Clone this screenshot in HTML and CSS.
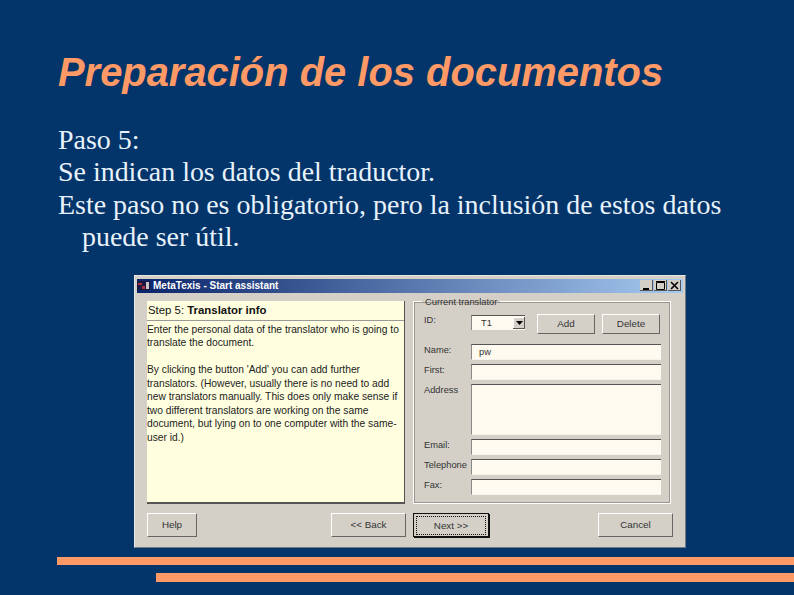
FILE: index.html
```html
<!DOCTYPE html>
<html lang="en">
<head>
  <meta charset="UTF-8" />
  <title>Preparación de los documentos</title>
  <link rel="stylesheet" href="styles.css">
</head>
<body>
  <div class="slide">
    <h1>Preparación de los documentos</h1>
    <div class="slide-text">
      <p>Paso 5:</p>
      <p>Se indican los datos del traductor.</p>
      <p>Este paso no es obligatorio, pero la inclusión de estos datos puede ser útil.</p>
    </div>

    <!-- Screenshot of the assistant window -->
    <div class="window">
      <div class="titlebar">
        <svg class="app-icon" width="13" height="9" viewBox="0 0 13 9">
          <rect width="13" height="9" fill="#1a1a40"/>
          <rect x="1" y="2" width="4" height="2" fill="#b03040"/>
          <rect x="5" y="5" width="3" height="3" fill="#b03040"/>
          <rect x="9" y="1" width="3" height="7" fill="#c8c8c8"/>
        </svg>
        <span class="title">MetaTexis - Start assistant</span>
        <div class="title-buttons">
          <div class="title-btn">
            <svg width="13" height="11" viewBox="0 0 13 11"><rect x="3" y="8" width="6" height="2" fill="#000"/></svg>
          </div>
          <div class="title-btn">
            <svg width="13" height="11" viewBox="0 0 13 11"><path d="M2.5 2.5h8v7h-8z M2 1.5h9" fill="none" stroke="#000"/></svg>
          </div>
          <div class="title-btn">
            <svg width="13" height="11" viewBox="0 0 13 11"><path d="M3 2l7 7M10 2l-7 7" fill="none" stroke="#000" stroke-width="1.6"/></svg>
          </div>
        </div>
      </div>

      <div class="window-body">
        <div class="info-panel">
          <div class="info-title">Step 5: <b>Translator info</b></div>
          <div class="info-text">
            <p>Enter the personal data of the translator who is going to translate the document.</p>
            <p>By clicking the button 'Add' you can add further translators. (However, usually there is no need to add new translators manually. This does only make sense if two different translators are working on the same document, but lying on to one computer with the same-user id.)</p>
          </div>
        </div>

        <fieldset class="group">
          <legend>Current translator</legend>
          <div class="id-row">
            <label>ID:</label>
            <div class="combo">
              <span>T1</span>
              <div class="combo-btn"><svg width="7" height="4" viewBox="0 0 7 4"><path d="M0 0h7L3.5 4z" fill="#000"/></svg></div>
            </div>
            <button class="btn btn-add">Add</button>
            <button class="btn btn-delete">Delete</button>
          </div>
          <div class="field name-field"><label>Name:</label><div class="input">pw</div></div>
          <div class="field"><label>First:</label><div class="input"></div></div>
          <div class="field"><label>Address</label><div class="input input-tall"></div></div>
          <div class="field"><label>Email:</label><div class="input"></div></div>
          <div class="field"><label>Telephone</label><div class="input"></div></div>
          <div class="field"><label>Fax:</label><div class="input"></div></div>
        </fieldset>
      </div>

      <div class="window-buttons">
        <button class="btn btn-help">Help</button>
        <button class="btn btn-back">&lt;&lt; Back</button>
        <button class="btn btn-next"><span>Next &gt;&gt;</span></button>
        <button class="btn btn-cancel">Cancel</button>
      </div>
    </div>
  </div>

  <div class="bars">
    <div class="bar bar-long"></div>
    <div class="bar bar-short"></div>
  </div>
</body>
</html>
```

FILE: styles.css
```css
html, body {
  margin: 0;
  height: 595px;
  overflow: hidden;
}

body {
  background: #03356a;
  display: flex;
  flex-direction: column;
}

.slide {
  flex: 1;
  padding: 50px 0 0 58px;
}

h1 {
  margin: 0;
  font-family: "Liberation Sans", Arial, sans-serif;
  font-size: 39.9px;
  line-height: 44px;
  font-weight: bold;
  font-style: italic;
  color: #ff9966;
}

.slide-text {
  margin-top: 30px;
  width: 690px;
  font-family: "Liberation Serif", "Times New Roman", serif;
  font-size: 27.95px;
  line-height: 32.4px;
  color: #e8f2fb;
}

.slide-text p {
  margin: 0;
  padding-left: 24px;
  text-indent: -24px;
}

.window {
  box-sizing: border-box;
  width: 552px;
  height: 273px;
  margin: 21px 0 0 76px;
  padding: 3px 2px;
  background: #d4d0c8;
  border: 1px solid #e8e6e0;
  border-right-color: #6f7a88;
  border-bottom-color: #6f7a88;
  font-family: "Liberation Sans", Arial, sans-serif;
  font-size: 9.3px;
  color: #333;
}

.titlebar {
  height: 14px;
  display: flex;
  align-items: center;
  gap: 3px;
  padding: 0 2px 0 0;
  background: linear-gradient(to right, #0a246a, #a6caf0);
  color: #fff;
  font-size: 10px;
  font-weight: bold;
}

.title-buttons {
  margin-left: auto;
  display: flex;
  gap: 1px;
}

.title-btn {
  width: 13px;
  height: 11px;
  background: #d4d0c8;
  box-shadow: inset -1px -1px 0 #555;
}

.title-btn svg {
  display: block;
}

.window-body {
  display: flex;
  align-items: flex-start;
  gap: 8px;
  padding: 8px 12px 0 10px;
}

.info-panel {
  box-sizing: border-box;
  width: 258px;
  height: 203px;
  background: #ffffdf;
  border-right: 1px solid #555;
  border-bottom: 2px solid #555;
}

.info-title {
  height: 19px;
  line-height: 18px;
  padding-left: 1px;
  border-bottom: 1px solid #999;
  font-size: 11.4px;
  color: #111;
}

.info-text {
  padding-top: 2px;
  line-height: 13.5px;
  font-size: 10.25px;
  color: #222;
}

.info-text p {
  margin: 0 0 13.5px;
}

.group {
  box-sizing: border-box;
  flex: 1;
  height: 206px;
  margin: -3px 0 0;
  padding: 0 9px 0 0;
  border: 1px solid #fff;
  box-shadow: inset 0 0 0 1px #9a968e;
}

legend {
  margin-left: 8px;
  padding: 0 3px;
  font-size: 9.3px;
  line-height: 8px;
}

.id-row {
  display: flex;
  align-items: flex-start;
  margin-top: 8px;
  height: 20px;
}

.id-row label, .field label {
  box-sizing: border-box;
  width: 57px;
  padding-left: 10px;
  flex: none;
  line-height: 12px;
}

.combo {
  box-sizing: border-box;
  width: 54px;
  height: 15px;
  margin-top: 1px;
  display: flex;
  align-items: center;
  padding-left: 9px;
  background: #fffaf0;
  border-top: 1px solid #555;
  border-left: 1px solid #888;
}

.combo span {
  flex: 1;
}

.combo-btn {
  width: 12px;
  height: 12px;
  display: flex;
  align-items: center;
  justify-content: center;
  background: #d4d0c8;
  box-shadow: inset -1px -1px 0 #555, inset 1px 1px 0 #fff;
}

.btn {
  padding: 0;
  background: #d4d0c8;
  border: 1px solid #fff;
  border-right-color: #666;
  border-bottom-color: #666;
  font-family: "Liberation Sans", Arial, sans-serif;
  font-size: 9.8px;
  color: #333;
}

.btn-add {
  width: 58px;
  height: 20px;
  margin-left: 12px;
}

.btn-delete {
  width: 58px;
  height: 20px;
  margin-left: 7px;
}

.field {
  display: flex;
  margin-top: 4px;
}

.name-field {
  margin-top: 10px;
}

.input {
  box-sizing: border-box;
  flex: 1;
  height: 16px;
  line-height: 15px;
  padding-left: 7px;
  background: #fffaf0;
  border-top: 1px solid #555;
  border-left: 1px solid #888;
  border-bottom: 1px solid #f4f2ec;
}

.input-tall {
  height: 51px;
}

.window-buttons {
  display: flex;
  align-items: center;
  padding: 9px 10px 0 10px;
}

.window-buttons .btn {
  height: 24px;
}

.btn-help {
  width: 50px;
}

.btn-back {
  width: 75px;
  margin-left: 134px;
}

.btn-next {
  width: 76px;
  margin-left: 7px;
  border: 1px solid #111;
  box-shadow: 1px 1px 0 #111;
}

.btn-next span {
  display: block;
  margin: 2px;
  line-height: 17px;
  border: 1px dotted #111;
}

.btn-cancel {
  width: 75px;
  margin-left: auto;
}

.bars {
  display: flex;
  flex-direction: column;
  gap: 8px;
  padding-bottom: 13px;
}

.bar {
  height: 8px;
  background: #ff9966;
}

.bar-long {
  margin-left: 57px;
}

.bar-short {
  height: 9px;
  margin-left: 156px;
}
```
